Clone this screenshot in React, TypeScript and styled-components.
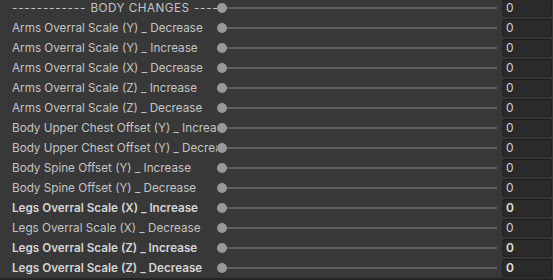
import React from "react";
import styled, { createGlobalStyle } from "styled-components";

const GlobalStyle = createGlobalStyle`
  html, body {
    margin: 0;
    padding: 0;
    background: #383838;
    overflow: hidden;
  }
  body {
    font-family: Inter, "Noto Sans", sans-serif;
  }
`;

const Panel = styled.div`
  width: 553px;
  height: 280px;
  background: #383838;
  display: flex;
  flex-direction: column;
  overflow: hidden;
`;

const List = styled.div`
  flex: 1;
  margin-top: -2px;
  display: flex;
  flex-direction: column;
`;

const Row = styled.div`
  height: 20px;
  display: grid;
  grid-template-columns: 205px 1fr 55px;
  align-items: center;
  padding: 0 1px 0 12px;
`;

const Label = styled.div<{ $bold?: boolean }>`
  font-size: 11.7px;
  line-height: 20px;
  color: ${(p) => (p.$bold ? "#d6d6d6" : "#c4c4c4")};
  font-weight: ${(p) => (p.$bold ? 600 : 400)};
  white-space: nowrap;
  overflow: hidden;
  text-overflow: clip;
`;

const Dashes = styled.span`
  letter-spacing: 0.8px;
`;

const Heading = styled.span`
  letter-spacing: 0.5px;
  margin: 0 1px;
`;

const Slider = styled.div`
  position: relative;
  height: 20px;
  display: flex;
  align-items: center;
  padding-left: 5px;
`;

const Track = styled.div`
  flex: 1;
  height: 2px;
  background: #5e5e5e;
`;

const Knob = styled.div`
  position: absolute;
  top: 5px;
  width: 10px;
  height: 10px;
  border-radius: 50%;
  background: #999999;
`;

const Field = styled.div<{ $bold?: boolean }>`
  height: 18px;
  margin-left: 5px;
  box-sizing: border-box;
  background: #2a2a2a;
  border: 1px solid #212121;
  border-top-color: #1b1b1b;
  border-radius: 3px;
  padding-left: 3px;
  font-size: 12px;
  line-height: 16px;
  color: ${(p) => (p.$bold ? "#e0e0e0" : "#d2d2d2")};
  font-weight: ${(p) => (p.$bold ? 600 : 400)};
`;

const Footer = styled.div`
  height: 2px;
  background: #242424;
`;

type Item = { label: React.ReactNode; id: string; bold?: boolean };

const items: Item[] = [
  {
    id: "header",
    label: (
      <>
        <Dashes>------------</Dashes> <Heading>BODY CHANGES</Heading>{" "}
        <Dashes>------------</Dashes>
      </>
    ),
  },
  { id: "a1", label: "Arms Overral Scale (Y) _ Decrease" },
  { id: "a2", label: "Arms Overral Scale (Y) _ Increase" },
  { id: "a3", label: "Arms Overral Scale (X) _ Decrease" },
  { id: "a4", label: "Arms Overral Scale (Z) _ Increase" },
  { id: "a5", label: "Arms Overral Scale (Z) _ Decrease" },
  { id: "b1", label: "Body Upper Chest Offset (Y) _ Increase" },
  { id: "b2", label: "Body Upper Chest Offset (Y) _ Decrease" },
  { id: "b3", label: "Body Spine Offset (Y) _ Increase" },
  { id: "b4", label: "Body Spine Offset (Y) _ Decrease" },
  { id: "l1", label: "Legs Overral Scale (X) _ Increase", bold: true },
  { id: "l2", label: "Legs Overral Scale (X) _ Decrease" },
  { id: "l3", label: "Legs Overral Scale (Z) _ Increase", bold: true },
  { id: "l4", label: "Legs Overral Scale (Z) _ Decrease", bold: true },
];

const SliderRow = ({ label, bold }: Item) => {
  const value = 0;
  return (
    <Row>
      <Label $bold={bold}>{label}</Label>
      <Slider>
        <Track />
        <Knob style={{ left: `${value * 100}%` }} />
      </Slider>
      <Field $bold={bold}>{value}</Field>
    </Row>
  );
};

const App = () => (
  <Panel>
    <GlobalStyle />
    <List>
      {items.map((item) => (
        <SliderRow key={item.id} {...item} />
      ))}
    </List>
    <Footer />
  </Panel>
);

export default App;
